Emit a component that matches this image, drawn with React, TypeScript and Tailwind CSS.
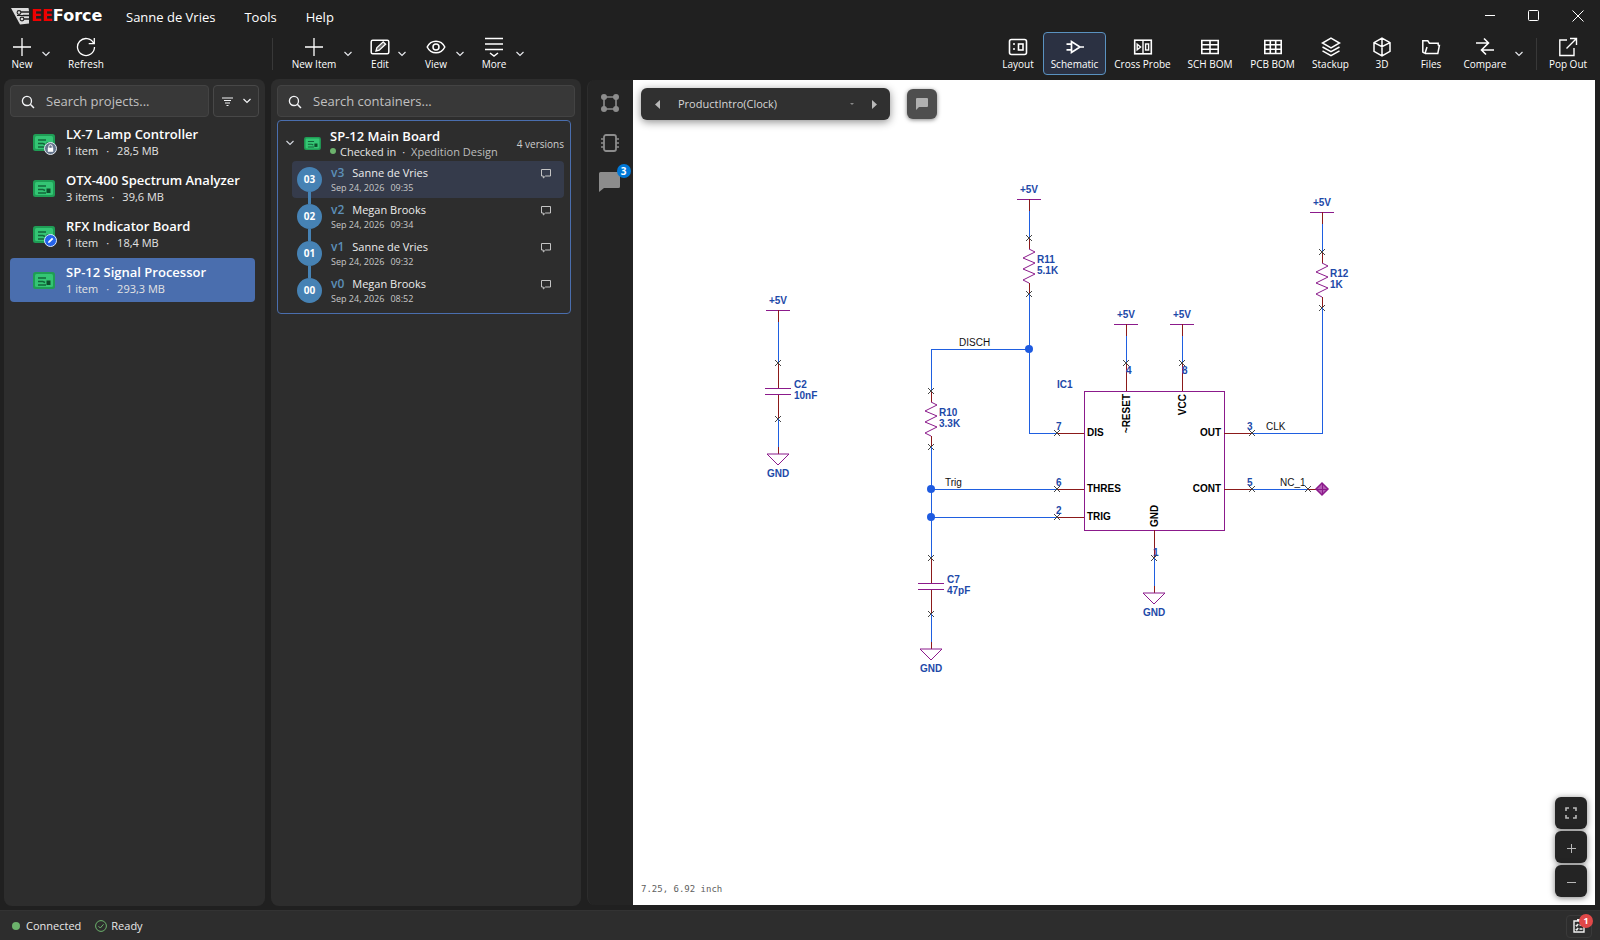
import type { ReactNode } from 'react'
import clsx from 'clsx'

/* ---------- data ---------- */

type Project = { name: string; items: string; size: string; mark?: 'lock' | 'edit'; active?: boolean }

const projects: Project[] = [
  { name: 'LX-7 Lamp Controller', items: '1 item', size: '28,5 MB', mark: 'lock' },
  { name: 'OTX-400 Spectrum Analyzer', items: '3 items', size: '39,6 MB' },
  { name: 'RFX Indicator Board', items: '1 item', size: '18,4 MB', mark: 'edit' },
  { name: 'SP-12 Signal Processor', items: '1 item', size: '293,3 MB', active: true }
]

const versions = [
  { num: '03', tag: 'v3', author: 'Sanne de Vries', date: 'Sep 24, 2026', time: '09:35' },
  { num: '02', tag: 'v2', author: 'Megan Brooks', date: 'Sep 24, 2026', time: '09:34' },
  { num: '01', tag: 'v1', author: 'Sanne de Vries', date: 'Sep 24, 2026', time: '09:32' },
  { num: '00', tag: 'v0', author: 'Megan Brooks', date: 'Sep 24, 2026', time: '08:52' }
]

/* ---------- icons ---------- */

function Icon({ children, size = 20, className }: { children: ReactNode; size?: number; className?: string }) {
  return (
    <svg
      width={size}
      height={size}
      viewBox="0 0 20 20"
      fill="none"
      stroke="currentColor"
      strokeWidth="1.3"
      className={clsx('shrink-0', className)}
      aria-hidden="true"
    >
      {children}
    </svg>
  )
}

const PlusIcon = () => <Icon><path d="M10 1v18M1 10h18" /></Icon>

const RefreshIcon = () => (
  <Icon><path d="M17.6 6.2A8.5 8.5 0 1 0 18.5 10M18.3 1v5.6h-5.6" /></Icon>
)

const EditIcon = () => (
  <Icon>
    <rect x="1.2" y="3.2" width="17.6" height="13.6" rx="1.5" strokeWidth="1.5" />
    <path d="m6 14 .8-3.2 6.4-6 2.4 2.4-6.4 6z" fill="currentColor" fillOpacity=".35" />
  </Icon>
)

const ViewIcon = () => (
  <Icon>
    <path d="M1.2 10C5 2.2 15 2.2 18.8 10 15 17.8 5 17.8 1.2 10z" strokeWidth="1.5" />
    <circle cx="10" cy="10" r="3" strokeWidth="1.5" />
  </Icon>
)

const MoreIcon = () => (
  <Icon><path d="M1 1.5h18M1 7h18M1 12.5h18M6 16l4 3 4-3" strokeWidth="1.5" /></Icon>
)

const LayoutIcon = () => (
  <Icon>
    <rect x="1.5" y="2.5" width="17" height="15" rx="2" strokeWidth="1.6" />
    <rect x="10.5" y="7" width="4.5" height="6" strokeWidth="1.6" />
    <path d="M5 7h2M5 12h2" strokeWidth="1.6" />
  </Icon>
)

const SchematicIcon = () => (
  <Icon>
    <path d="M6.5 4.5v11L15 10zM1.5 7.2h5M1.5 12.8h5M15 10h4" strokeWidth="1.7" />
  </Icon>
)

const CrossProbeIcon = () => (
  <Icon>
    <rect x="1.7" y="3.2" width="16.6" height="13.6" strokeWidth="1.6" />
    <path d="M10 3v14M4.2 7.2v5.6L7.6 10z" strokeWidth="1.4" />
    <rect x="12.6" y="7" width="3" height="6" strokeWidth="1.4" />
  </Icon>
)

const SchBomIcon = () => (
  <Icon><path d="M1.8 3.5h16.4v13H1.8zM10 3.5v13M1.8 7.8h16.4M1.8 12.2h16.4" strokeWidth="1.6" /></Icon>
)

const PcbBomIcon = () => (
  <Icon><path d="M1.8 3.5h16.4v13H1.8zM7.3 3.5v13M12.7 3.5v13M1.8 7.8h16.4M1.8 12.2h16.4" strokeWidth="1.6" /></Icon>
)

const StackupIcon = () => (
  <Icon>
    <path d="m10 1.2 8.5 4.8-8.5 4.8L1.5 6zM1.5 10l8.5 4.6 8.5-4.6M1.5 13.8l8.5 4.8 8.5-4.8" strokeWidth="1.5" />
  </Icon>
)

const CubeIcon = () => (
  <Icon>
    <path d="m10 1.2 8 4.4v8.8l-8 4.4-8-4.4V5.6zM2 5.6l8 4 8-4M10 9.6v9.2M10 1.2v8.4" strokeWidth="1.5" />
  </Icon>
)

const FilesIcon = () => (
  <Icon>
    <path d="M4 16.5 1.8 15V3.8h5l1.6 2.4h8.800v2.200M4 16.500l2-6.500M17.200 8.400h1.200l-1.600 8.100H4" strokeWidth="1.5" />
  </Icon>
)

const CompareIcon = () => (
  <Icon><path d="M1 6h12M9 1.5 13.5 6 9 10.5M19 13H7M11 8.5 6.5 13l4.5 4.5" strokeWidth="1.6" /></Icon>
)

const PopOutIcon = () => (
  <Icon><path d="M9 3H1.8v15.5H16V11M8.5 11.5l10-10M12 1.5h6.5V8" strokeWidth="1.4" /></Icon>
)

const SearchIcon = () => (
  <Icon size={14} className="text-gray-100">
    <circle cx="8.5" cy="8.5" r="6.5" strokeWidth="1.9" />
    <path d="m13.3 13.3 5.2 5.2" strokeWidth="2.2" />
  </Icon>
)

function Chevron({ className }: { className?: string }) {
  return (
    <svg width="8" height="6" viewBox="0 0 8 6" fill="none" stroke="currentColor" className={className} aria-hidden="true">
      <path d="m.5 1 3.5 3.5L7.5 1" strokeWidth="1.2" />
    </svg>
  )
}

function BoardIcon({ width = 22, height = 17 }: { width?: number; height?: number }) {
  return (
    <svg width={width} height={height} viewBox="0 0 22 17" className="shrink-0" aria-hidden="true">
      <rect width="22" height="17" rx="2.5" fill="#1f9d55" />
      <rect x="2" y="2" width="18" height="13" rx="1.5" fill="#34c574" />
      <path d="M5 6h8M5 9.5h5M5 13h8M10 9.5l2 1" stroke="#12663a" strokeWidth="1.4" fill="none" />
      <rect x="13.5" y="8.5" width="4" height="4.5" fill="#0c4d2b" />
    </svg>
  )
}

function LockMark() {
  return (
    <svg width="13" height="13" viewBox="0 0 13 13" className="absolute -right-0.5 -bottom-1" aria-hidden="true">
      <circle cx="6.5" cy="6.5" r="6" fill="#64748b" stroke="#e2e8f0" />
      <rect x="3.8" y="5.8" width="5.4" height="4" fill="#fff" />
      <path d="M4.8 6V4.5a1.7 1.7 0 0 1 3.4 0V6" fill="none" stroke="#fff" />
    </svg>
  )
}

function EditMark() {
  return (
    <svg width="13" height="13" viewBox="0 0 13 13" className="absolute -right-0.5 -bottom-1" aria-hidden="true">
      <circle cx="6.5" cy="6.5" r="6" fill="#2563eb" stroke="#dbeafe" />
      <path d="m4 9 .5-1.8L8 3.8 9.3 5 5.8 8.5z" fill="#fff" />
    </svg>
  )
}

function CommentOutline() {
  return (
    <svg width="12" height="12" viewBox="0 0 12 12" fill="none" stroke="#c4c4c4" aria-hidden="true">
      <path d="M1.5 1.5h9V8h-5l-2.200 2V8H1.500z" />
    </svg>
  )
}

function LogoMark() {
  return (
    <svg width="20" height="18" viewBox="0 0 20 18" className="shrink-0" aria-hidden="true">
      <path d="M0 1h17.5l.5 2.500V16.500L9 17.500z" fill="#dcdcdc" />
      <path d="M9 5h9M12 8.500h6M12 12h6" stroke="#202020" strokeWidth="1.300" />
      <path d="M6 8.500h7" stroke="#202020" strokeWidth="1" />
      <circle cx="8" cy="5.5" r="1.900" fill="#dcdcdc" stroke="#202020" strokeWidth="1.100" />
      <circle cx="11" cy="12" r="1.900" fill="#dcdcdc" stroke="#202020" strokeWidth="1.100" />
    </svg>
  )
}

/* ---------- title bar and toolbar ---------- */

function TitleBar() {
  return (
    <header className="flex h-8 shrink-0 items-center text-[13px] text-white">
      <div className="flex w-[116px] items-center pl-[11px]">
        <LogoMark />
        <span className="font-['DejaVu_Sans',sans-serif] text-[16px] leading-4 font-bold">
          <span className="text-[#f00000]">EE</span>Force
        </span>
      </div>
      <nav className="flex items-center gap-[9px] pt-[3px]">
        <button className="px-2.5">Sanne de Vries</button>
        <button className="px-2.5">Tools</button>
        <button className="px-2.5">Help</button>
      </nav>
      <div className="ml-auto flex items-center">
        <button aria-label="Minimize" className="flex h-8 w-11 items-center justify-center">
          <svg width="12" height="12" stroke="#fff"><path d="M1 5.5h10" /></svg>
        </button>
        <button aria-label="Maximize" className="flex h-8 w-11 items-center justify-center">
          <svg width="12" height="12" stroke="#fff" fill="none"><rect x=".5" y=".5" width="10" height="10" rx="1" /></svg>
        </button>
        <button aria-label="Close" className="flex h-8 w-11 items-center justify-center">
          <svg width="12" height="12" stroke="#fff"><path d="m.5.5 11 11M11.5.5l-11 11" /></svg>
        </button>
      </div>
    </header>
  )
}

function Tool({ label, icon, width, active }: { label: string; icon: ReactNode; width: string; active?: boolean }) {
  return (
    <button
      className={clsx(
        'flex h-[43px] flex-col items-center justify-start rounded border pt-1 text-[10px] leading-[14px] whitespace-nowrap text-white',
        width,
        active ? 'border-[#5a92c0] bg-[#2b3142]' : 'border-transparent'
      )}
    >
      {icon}
      {label}
    </button>
  )
}

function DropArrow({ label }: { label: string }) {
  return (
    <button aria-label={label} className="-ml-1 flex h-[43px] w-4 items-center justify-center text-gray-200">
      <Chevron />
    </button>
  )
}

const Divider = () => <div className="h-8 w-px bg-[#383838]" />

function Toolbar() {
  return (
    <div className="flex h-12 shrink-0 items-start">
      <div className="flex w-[273px] items-center">
        <Tool label="New" icon={<PlusIcon />} width="ml-0.5 w-10" />
        <DropArrow label="New options" />
        <Tool label="Refresh" icon={<RefreshIcon />} width="ml-1.5 w-[52px]" />
        <div className="ml-auto"><Divider /></div>
      </div>
      <div className="flex items-center pl-[11px]">
        <Tool label="New Item" icon={<PlusIcon />} width="w-[60px]" />
        <DropArrow label="New item options" />
        <Tool label="Edit" icon={<EditIcon />} width="ml-1.5 w-9" />
        <DropArrow label="Edit options" />
        <Tool label="View" icon={<ViewIcon />} width="ml-1.5 w-10" />
        <DropArrow label="View options" />
        <Tool label="More" icon={<MoreIcon />} width="ml-1 w-11" />
        <DropArrow label="More options" />
      </div>
      <div className="ml-auto flex items-center gap-px pr-1.5">
        <Tool label="Layout" icon={<LayoutIcon />} width="w-12" />
        <Tool label="Schematic" icon={<SchematicIcon />} width="w-[63px]" active />
        <Tool label="Cross Probe" icon={<CrossProbeIcon />} width="w-[71px]" />
        <Tool label="SCH BOM" icon={<SchBomIcon />} width="w-[62px]" />
        <Tool label="PCB BOM" icon={<PcbBomIcon />} width="w-[61px]" />
        <Tool label="Stackup" icon={<StackupIcon />} width="w-[53px]" />
        <Tool label="3D" icon={<CubeIcon />} width="w-12" />
        <Tool label="Files" icon={<FilesIcon />} width="w-12" />
        <Tool label="Compare" icon={<CompareIcon />} width="w-[58px]" />
        <DropArrow label="Compare options" />
        <div className="pr-1 pl-2"><Divider /></div>
        <Tool label="Pop Out" icon={<PopOutIcon />} width="w-[52px]" />
      </div>
    </div>
  )
}

/* ---------- left panels ---------- */

function SearchBox({ placeholder }: { placeholder: string }) {
  return (
    <label className="flex h-8 min-w-0 flex-1 items-center gap-[11px] rounded border border-[#434343] bg-[#383838] px-2.5 pt-0.5">
      <SearchIcon />
      <input
        type="text"
        aria-label={placeholder}
        placeholder={placeholder}
        className="min-w-0 flex-1 bg-transparent text-[13px] text-white outline-none placeholder:text-[#c0c0c0]"
      />
    </label>
  )
}

function ProjectsPanel() {
  return (
    <section className="flex w-[261px] shrink-0 flex-col rounded-lg bg-[#2d2d2d] p-1.5">
      <div className="flex gap-1">
        <SearchBox placeholder="Search projects..." />
        <button
          aria-label="Filter"
          className="flex h-8 w-[46px] items-center justify-center gap-2.5 rounded border border-[#484848] bg-[#323232] text-gray-100"
        >
          <svg width="11" height="9" viewBox="0 0 11 9" stroke="currentColor" aria-hidden="true">
            <path d="M0 1h11M2 3.5h7M3 6h5M4.5 8.5h2" />
          </svg>
          <Chevron />
        </button>
      </div>
      <ul className="mt-[3px] mr-1 flex flex-col gap-0.5">
        {projects.map((project) => (
          <li key={project.name}>
            <button
              className={clsx(
                'flex h-11 w-full items-center gap-[11px] rounded pl-[23px] text-left',
                project.active && 'bg-[#4a6eae]'
              )}
            >
              <span className="relative">
                <BoardIcon />
                {project.mark === 'lock' && <LockMark />}
                {project.mark === 'edit' && <EditMark />}
              </span>
              <span className="flex flex-col">
                <span className="text-[13px] leading-[17px] font-semibold whitespace-nowrap text-white">{project.name}</span>
                <span className="flex gap-2 text-[11px] leading-4 text-[#e4e4e4]">
                  <span>{project.items}</span>
                  <span>·</span>
                  <span>{project.size}</span>
                </span>
              </span>
            </button>
          </li>
        ))}
      </ul>
    </section>
  )
}

function ContainersPanel() {
  return (
    <section className="flex w-[310px] shrink-0 flex-col rounded-lg bg-[#2d2d2d] p-1.5">
      <div className="flex">
        <SearchBox placeholder="Search containers..." />
      </div>
      <div className="mt-[3px] mr-1 rounded border border-[#4a6eae] pr-1.5 pb-1">
        <div className="flex h-10 items-center pt-1">
          <button aria-label="Collapse SP-12 Main Board" className="flex w-6 justify-center text-gray-300">
            <Chevron />
          </button>
          <span className="ml-0.5"><BoardIcon width={17} height={13} /></span>
          <div className="ml-[9px]">
            <h2 className="text-[13px] leading-4 font-semibold text-white">SP-12 Main Board</h2>
            <p className="flex items-center text-[11px] leading-[15px] text-[#e4e4e4]">
              <span className="mr-1 h-1.5 w-1.5 rounded-full bg-[#6cb26c]" />
              Checked in
              <span className="px-1.5">·</span>
              <span className="text-[#bdbdbd]">Xpedition Design</span>
            </p>
          </div>
          <span className="ml-auto pt-0.5 text-[10px] text-[#cfcfcf]">4 versions</span>
        </div>
        <ul className="ml-[14px]">
          {versions.map((version, index) => (
            <li
              key={version.num}
              className={clsx('flex h-[37px] items-center rounded pl-[5px]', index === 0 && 'bg-[#353b4b]')}
            >
              <span className="relative flex h-[25px] w-[25px] shrink-0 items-center justify-center rounded-full bg-[#4682b4] text-[10px] font-bold text-white">
                {version.num}
                {index < versions.length - 1 && (
                  <span className="absolute top-[25px] left-[11px] h-3 w-[3px] bg-[#4682b4]" />
                )}
              </span>
              <div className="ml-[9px] flex-1">
                <p className="flex items-center gap-2 text-[11px] leading-4 text-[#ececec]">
                  <span className="text-[12px] font-semibold text-[#5c8fb8]">{version.tag}</span>
                  {version.author}
                </p>
                <p className="flex gap-1.5 text-[9px] leading-[14px] text-[#c8c8c8]">
                  <span>{version.date}</span>
                  <span>{version.time}</span>
                </p>
              </div>
              <button aria-label={`Comments on ${version.tag}`} className="mr-3 mb-3">
                <CommentOutline />
              </button>
            </li>
          ))}
        </ul>
      </div>
    </section>
  )
}

/* ---------- schematic sheet ---------- */

const WIRE = '#1f5fe0'
const PIN = '#8b1a1a'
const PART = '#8b1a8b'
const NAME = '#1d49a8'

type At = { x: number; y: number }

const Wire = ({ d }: { d: string }) => <path d={d} stroke={WIRE} />
const Pin = ({ d }: { d: string }) => <path d={d} stroke={PIN} />

function Cross({ x, y }: At) {
  return <path d={`M${x - 3} ${y - 3}l6 6M${x - 3} ${y + 3}l6 -6`} stroke="#444" shapeRendering="auto" />
}

function Dot({ x, y }: At) {
  return <circle cx={x} cy={y} r="4" fill="#1f5be0" shapeRendering="auto" />
}

function Label({ x, y, children, anchor = 'start', color = NAME, bold = true, turned }: At & {
  children: ReactNode
  anchor?: 'start' | 'middle' | 'end'
  color?: string
  bold?: boolean
  turned?: boolean
}) {
  return (
    <text
      x={x}
      y={y}
      textAnchor={anchor}
      fill={color}
      transform={turned ? `rotate(-90 ${x} ${y})` : undefined}
      className={clsx("font-['Liberation_Sans',sans-serif] text-[10px]", bold && 'font-bold')}
    >
      {children}
    </text>
  )
}

// supply bar with its stub, wired down to `to`
function Supply({ x, y, to }: At & { to: number }) {
  return (
    <>
      <Label x={x} y={y - 6} anchor="middle">+5V</Label>
      <path d={`M${x - 12} ${y}h24`} stroke={PART} />
      <Pin d={`M${x} ${y}v12`} />
      <Wire d={`M${x} ${y + 12}V${to}`} />
      <Cross x={x} y={to} />
    </>
  )
}

function Ground({ x, y }: At) {
  return (
    <>
      <Pin d={`M${x} ${y - 7}v7`} />
      <path d={`M${x - 11} ${y}h22l-11 11z`} stroke={PART} shapeRendering="auto" />
      <Label x={x} y={y + 23} anchor="middle">GND</Label>
    </>
  )
}

function Resistor({ x, y, name, value }: At & { name: string; value: string }) {
  return (
    <>
      <Pin d={`M${x} ${y}v11M${x} ${y + 45}v11`} />
      <path
        d={`M${x} ${y + 11}l6 3l-12 6l12 5l-12 6l12 5l-12 6l6 3`}
        stroke={PART}
        shapeRendering="auto"
      />
      <Cross x={x} y={y} />
      <Cross x={x} y={y + 56} />
      <Label x={x + 8} y={y + 25}>{name}</Label>
      <Label x={x + 8} y={y + 36}>{value}</Label>
    </>
  )
}

function Capacitor({ x, y, name, value }: At & { name: string; value: string }) {
  return (
    <>
      <Pin d={`M${x} ${y}v25M${x} ${y + 31}v25`} />
      <path d={`M${x - 13} ${y + 25}h26M${x - 13} ${y + 31}h26`} stroke={PART} />
      <Cross x={x} y={y} />
      <Cross x={x} y={y + 56} />
      <Label x={x + 16} y={y + 25}>{name}</Label>
      <Label x={x + 16} y={y + 36}>{value}</Label>
    </>
  )
}

function Schematic() {
  return (
    <svg
      viewBox="633 80 962 825"
      preserveAspectRatio="xMinYMin meet"
      className="block h-full w-full"
      role="img"
      aria-label="ProductIntro(Clock) schematic"
    >
      <g fill="none" shapeRendering="crispEdges">
        {/* decoupling branch */}
        <Supply x={778} y={310} to={363} />
        <Capacitor x={778} y={363} name="C2" value="10nF" />
        <Wire d="M778 419v28" />
        <Ground x={778} y={454} />

        {/* R11 and the discharge net */}
        <Supply x={1029} y={199} to={238} />
        <Resistor x={1029} y={238} name="R11" value="5.1K" />
        <Wire d="M1029 294V433H1057M1029 349H931V391" />
        <Dot x={1029} y={349} />
        <Label x={959} y={346} color="#111" bold={false}>DISCH</Label>

        {/* R10, C7 and the trigger nets */}
        <Resistor x={931} y={391} name="R10" value="3.3K" />
        <Wire d="M931 447V558M931 489H1057M931 517H1057" />
        <Dot x={931} y={489} />
        <Dot x={931} y={517} />
        <Label x={945} y={486} color="#111" bold={false}>Trig</Label>
        <Capacitor x={931} y={558} name="C7" value="47pF" />
        <Wire d="M931 614v28" />
        <Ground x={931} y={649} />

        {/* timer IC */}
        <rect x="1084" y="391" width="140" height="139" stroke={PART} />
        <Label x={1057} y={388}>IC1</Label>
        <Pin d="M1057 433h27M1057 489h27M1057 517h27M1224 433h27M1224 489h27M1126 363v28M1182 363v28M1154 530v28" />
        <Cross x={1057} y={433} />
        <Cross x={1057} y={489} />
        <Cross x={1057} y={517} />
        <Label x={1056} y={430}>7</Label>
        <Label x={1056} y={486}>6</Label>
        <Label x={1056} y={514}>2</Label>
        <Label x={1087} y={436} color="#000">DIS</Label>
        <Label x={1087} y={492} color="#000">THRES</Label>
        <Label x={1087} y={520} color="#000">TRIG</Label>
        <Label x={1221} y={436} anchor="end" color="#000">OUT</Label>
        <Label x={1221} y={492} anchor="end" color="#000">CONT</Label>
        <Label x={1130} y={394} anchor="end" color="#000" turned>~RESET</Label>
        <Label x={1186} y={394} anchor="end" color="#000" turned>VCC</Label>
        <Label x={1158} y={527} color="#000" turned>GND</Label>
        <Supply x={1126} y={324} to={363} />
        <Supply x={1182} y={324} to={363} />
        <Label x={1126} y={374}>4</Label>
        <Label x={1182} y={374}>8</Label>
        <Label x={1153} y={556}>1</Label>
        <Cross x={1154} y={558} />
        <Wire d="M1154 558v28" />
        <Ground x={1154} y={593} />

        {/* clock output */}
        <Supply x={1322} y={212} to={252} />
        <Resistor x={1322} y={252} name="R12" value="1K" />
        <Wire d="M1322 308V433H1251" />
        <Cross x={1252} y={433} />
        <Label x={1247} y={430}>3</Label>
        <Label x={1266} y={430} color="#111" bold={false}>CLK</Label>

        {/* unconnected control pin */}
        <Wire d="M1251 489h56" />
        <Cross x={1252} y={489} />
        <Label x={1247} y={486}>5</Label>
        <Label x={1280} y={486} color="#111" bold={false}>NC_1</Label>
        <Cross x={1308} y={489} />
        <Pin d="M1308 489h9" />
        <path d="m1322 483 6 6-6 6-6-6z" fill="#b35cb3" stroke={PART} strokeWidth="1.5" shapeRendering="auto" />
        <path d="M1322 483v12M1316 489h12" stroke={PART} />
      </g>
    </svg>
  )
}

/* ---------- viewer ---------- */

function SideStrip() {
  return (
    <aside className="flex w-[46px] shrink-0 flex-col items-center rounded-l-lg border-l border-[#2d2d2d] bg-[#242424] pt-3.5 pr-0.5 text-[#8c8c8c]">
      <button aria-label="Nets" className="h-[18px]">
        <svg width="18" height="18" viewBox="0 0 18 18" fill="currentColor" aria-hidden="true">
          <path d="M3 3h12v12H3z" fill="none" stroke="currentColor" strokeWidth="1.6" />
          <circle cx="3" cy="3" r="3" />
          <circle cx="15" cy="3" r="3" />
          <circle cx="3" cy="15" r="3" />
          <circle cx="15" cy="15" r="3" />
        </svg>
      </button>
      <button aria-label="Components" className="mt-[22px] h-[18px]">
        <svg width="18" height="18" viewBox="0 0 18 18" fill="none" stroke="currentColor" aria-hidden="true">
          <rect x="3" y="1" width="12" height="16" rx="2" strokeWidth="1.8" />
          <path d="M0 5h3M0 9h3M0 13h3M15 5h3M15 9h3M15 13h3" strokeWidth="1.5" />
        </svg>
      </button>
      <button aria-label="Comments, 3 new" className="relative mt-5 h-5">
        <svg width="22" height="20" viewBox="0 0 22 20" fill="currentColor" aria-hidden="true">
          <path d="M1.5 0h18Q21 0 21 1.5v13q0 1.5-1.5 1.5H5l-5 4V1.5Q0 0 1.5 0z" />
        </svg>
        <span className="absolute -top-2 -right-2.5 flex h-3.5 w-3.5 items-center justify-center rounded-full bg-[#0078d7] text-[10px] font-bold text-white">
          3
        </span>
      </button>
    </aside>
  )
}

function Viewer() {
  return (
    <main className="flex min-w-0 flex-1 pt-px pb-px">
      <SideStrip />
      <div className="relative min-w-0 flex-1 bg-white">
        <Schematic />

        <div className="absolute top-2 left-2 flex items-center gap-[17px]">
          <div className="flex h-8 w-[249px] items-center rounded-md bg-[#303030] text-[#b8b8b8] shadow-[0_2px_8px_rgba(0,0,0,0.45)]">
            <button aria-label="Previous sheet" className="flex w-8 justify-center">
              <svg width="5" height="9" fill="currentColor"><path d="M5 0v9L0 4.5z" /></svg>
            </button>
            <button className="flex flex-1 items-center justify-between pr-1 pl-[5px] text-[11px] text-[#d6d6d6]">
              ProductIntro(Clock)
              <svg width="4" height="2" fill="#888"><path d="M0 0h4L2 2z" /></svg>
            </button>
            <button aria-label="Next sheet" className="flex w-8 justify-center">
              <svg width="5" height="9" fill="currentColor"><path d="M0 0v9l5-4.5z" /></svg>
            </button>
          </div>
          <button
            aria-label="Add comment"
            className="flex h-[30px] w-[30px] items-center justify-center rounded-md bg-[#4e4e4e] shadow-[0_1px_4px_rgba(0,0,0,0.5)]"
          >
            <svg width="12" height="12" viewBox="0 0 12 12" fill="#b0b0b0"><path d="M1 0h10q1 0 1 1v7q0 1-1 1H3l-3 3V1q0-1 1-1z" /></svg>
          </button>
        </div>

        <p className="absolute bottom-2.5 left-2 font-['DejaVu_Sans_Mono',monospace] text-[9px] leading-3 text-[#606060]">
          7.25, 6.92 inch
        </p>

        <div className="absolute right-2 bottom-2 flex flex-col gap-0.5 text-[#b8b8b8]">
          <button aria-label="Fit to view" className="flex h-8 w-8 items-center justify-center rounded-md bg-[#242424] shadow-[0_1px_6px_rgba(0,0,0,0.5)]">
            <svg width="12" height="12" viewBox="0 0 12 12" fill="none" stroke="currentColor" strokeWidth="1.6">
              <path d="M1 4V1h3M8 1h3v3M11 8v3H8M4 11H1V8" />
            </svg>
          </button>
          <button aria-label="Zoom in" className="flex h-8 w-8 items-center justify-center rounded-md bg-[#242424] pt-0.5 shadow-[0_1px_6px_rgba(0,0,0,0.5)]">
            <svg width="9" height="9" stroke="currentColor"><path d="M4.5 0v9M0 4.5h9" /></svg>
          </button>
          <button aria-label="Zoom out" className="flex h-8 w-8 items-center justify-center rounded-md bg-[#242424] pt-0.5 shadow-[0_1px_6px_rgba(0,0,0,0.5)]">
            <svg width="9" height="9" stroke="currentColor"><path d="M0 4.5h9" /></svg>
          </button>
        </div>
      </div>
    </main>
  )
}

function StatusBar() {
  return (
    <footer className="flex h-[30px] shrink-0 items-center border-t border-[#333] bg-[#2d2d2d] pt-px pr-2 pl-3 text-[11px] text-[#e8e8e8]">
      <span className="mr-1.5 h-2 w-2 rounded-full bg-[#6cb26c]" />
      Connected
      <svg width="12" height="12" viewBox="0 0 12 12" fill="none" stroke="#6cb26c" className="mr-1 ml-3.5" aria-hidden="true">
        <circle cx="6" cy="6" r="5.4" />
        <path d="m3.5 6.2 1.8 1.8 3.2-3.7" />
      </svg>
      Ready
      <button
        aria-label="Tasks, 1 pending"
        className="relative ml-auto flex h-[23px] w-[26px] items-center justify-center rounded border border-[#3a3a3a]"
      >
        <svg width="12" height="14" viewBox="0 0 12 14" fill="none" stroke="#f0f0f0" strokeWidth="1.4" aria-hidden="true">
          <path d="M1 2h10v11H1zM4 .8h4M2.8 6l1 1 1.4-2M6.5 6h3M2.8 10l1 1 1.4-2M6.5 10h3" />
        </svg>
        <span className="absolute -top-0.5 -right-0.5 flex h-[14px] w-[14px] items-center justify-center rounded-full bg-[#e04848] text-[9px] font-bold text-white">
          1
        </span>
      </button>
    </footer>
  )
}

export default function App() {
  return (
    <div className="flex h-screen flex-col overflow-hidden bg-[#202020] font-['Open_Sans','Noto_Sans',sans-serif]">
      <TitleBar />
      <Toolbar />
      <div className="-mt-px flex min-h-0 flex-1 gap-1.5 pr-[5px] pb-1 pl-1">
        <ProjectsPanel />
        <ContainersPanel />
        <Viewer />
      </div>
      <StatusBar />
    </div>
  )
}
